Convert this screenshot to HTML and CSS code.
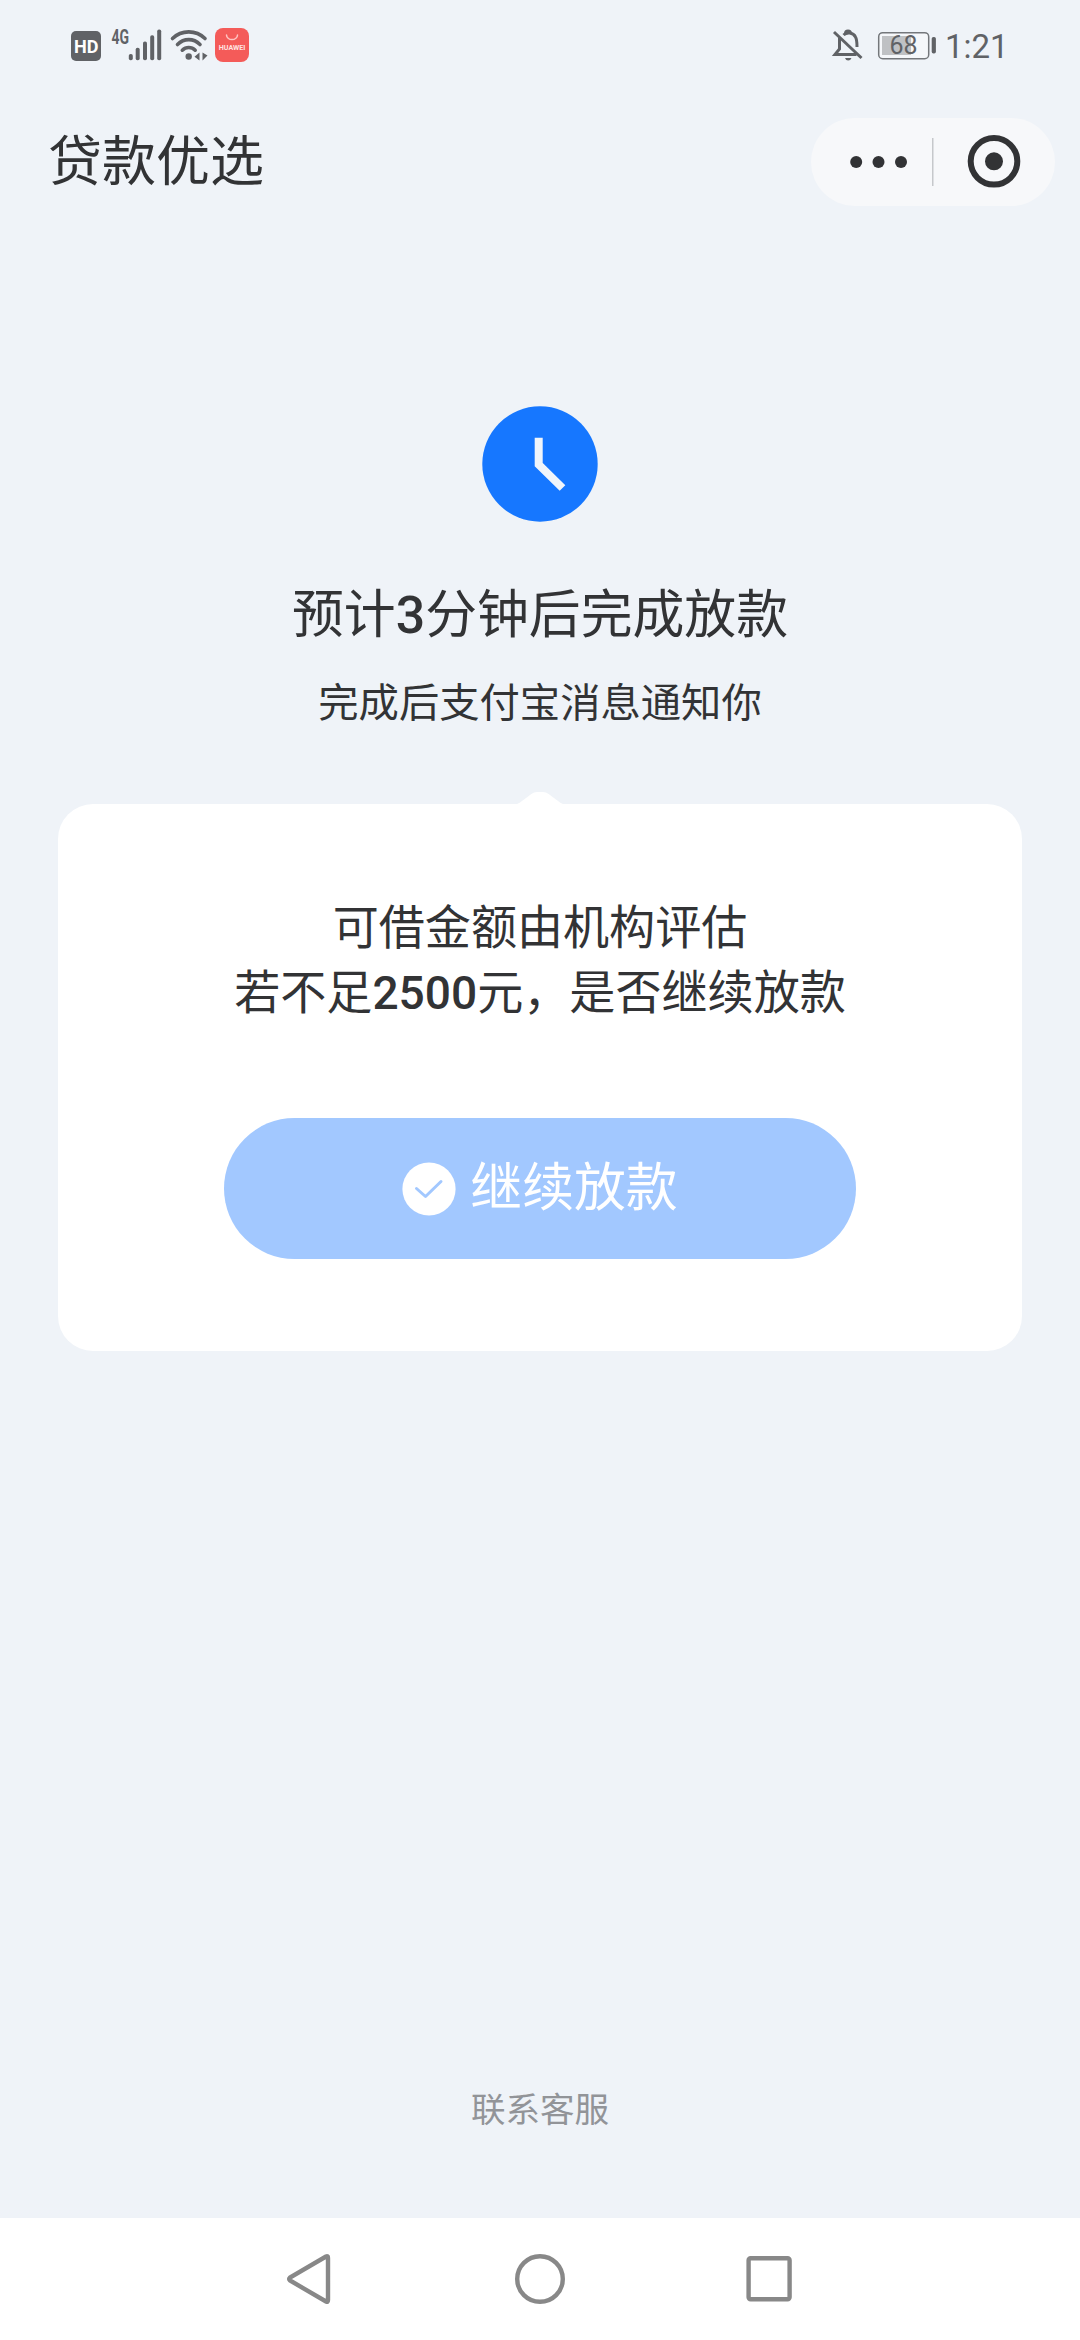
FILE: index.html
```html
<!DOCTYPE html>
<html lang="zh-CN">
<head>
<meta charset="utf-8">
<title>贷款优选</title>
<link rel="stylesheet" href="styles.css">
</head>
<body>
<div class="screen">
  <div class="status">
    <svg class="status-left" viewBox="0 0 184 90" width="184" height="90" fill="#606266">
      <rect x="1" y="31" width="30" height="30" rx="5"/>
      <text class="hd" x="4" y="52.5" textLength="24.500" lengthAdjust="spacingAndGlyphs">HD</text>
      <text class="net" x="41.500" y="43.500" textLength="17.500" lengthAdjust="spacingAndGlyphs">4G</text>
      <g>
        <rect x="58.800" y="54" width="4" height="6.300" rx="1.800"/>
        <rect x="65.700" y="47.700" width="4" height="12.600" rx="1.800"/>
        <rect x="73" y="41.500" width="4" height="18.800" rx="1.800"/>
        <rect x="80.200" y="35.300" width="4" height="25" rx="1.800"/>
        <rect x="87.200" y="29.500" width="4" height="30.800" rx="1.800"/>
      </g>
      <g fill="none" stroke="#606266" stroke-width="3.600" stroke-linecap="round">
        <path d="M102.500 38.500C111.500 29.700 126 29.700 135 38.500"/>
        <path d="M107.500 44.500C114 38 123.500 38 130 44.500"/>
        <path d="M112.300 50.200C116 46.500 121.500 46.500 125.200 50.200"/>
      </g>
      <circle cx="118.700" cy="56.500" r="3.200"/>
      <path d="M129.500 52.500V60.500L124.500 56.800ZM132.500 52.500V60.500L137.500 55.500Z"/>
      <rect x="145" y="28" width="34" height="34" rx="8" fill="#f45b59"/>
      <path d="M156.500 35a5.500 4.600 0 0 0 11 0" fill="none" stroke="#ffc4c1" stroke-width="1.500" stroke-linecap="round"/>
      <text class="brand" x="148.800" y="49.800" textLength="26.500" lengthAdjust="spacingAndGlyphs">HUAWEI</text>
    </svg>
    <svg class="status-right" viewBox="0 0 182 90" width="182" height="90" fill="#606266">
      <g fill="none" stroke="#606266" stroke-width="3">
        <path d="M8.500 38V49L4 54.500H25.500M12.500 35C15.500 32.200 22 32 24.500 37Q26 39.500 26 47"/>
        <path d="M14.500 33.500C14.500 30.300 19.500 30.300 19.500 33.500"/>
        <path d="M3 32L30.500 58"/>
      </g>
      <path d="M14 58H20.500Q19.500 60.500 17.200 60.500T14 58Z"/>
      <rect x="47.700" y="32.700" width="50" height="26" rx="4" fill="#f5f7fa" stroke="#74777b" stroke-width="1.500"/>
      <rect x="51" y="36" width="29" height="19" fill="#bfc1c4"/>
      <text class="battery" x="58.500" y="53.700" textLength="28" lengthAdjust="spacingAndGlyphs">68</text>
      <rect x="100.700" y="37" width="4.200" height="16.500" rx="1.800"/>
      <text class="time" x="114" y="57.700">1:21</text>
    </svg>
  </div>

  <header class="header">
    <h1 class="title">贷款优选</h1>
    <svg class="capsule" viewBox="0 0 244 88" width="244" height="88" fill="#323335">
      <rect width="244" height="88" rx="44" fill="#f7f8fa"/>
      <circle cx="45.200" cy="44" r="6"/>
      <circle cx="67.500" cy="44" r="6"/>
      <circle cx="90" cy="44" r="6"/>
      <rect x="121" y="20" width="1.500" height="48" fill="#c6c8cb"/>
      <circle cx="183" cy="43.300" r="23.300" fill="none" stroke="#323335" stroke-width="6"/>
      <circle cx="183" cy="43.300" r="9"/>
    </svg>
  </header>

  <main class="main">
    <svg class="clock" viewBox="0 0 116 116" width="116" height="116">
      <circle cx="58" cy="58" r="57.700" fill="#1677ff"/>
      <path d="M56.700 31.800V58.500L80.500 82" fill="none" stroke="#f0f5fb" stroke-width="8"/>
    </svg>
    <h2 class="heading">预计<b>3</b>分钟后完成放款</h2>
    <p class="sub">完成后支付宝消息通知你</p>
    <svg class="arrow" viewBox="0 0 50 13" width="50" height="13">
      <path d="M0 13Q4 11.500 8 8.200L16 2.200Q19 0 22 0H28Q31 0 34 2.200L42 8.200Q46 11.500 50 13Z" fill="#fff"/>
    </svg>
    <section class="card">
      <p class="card-text">可借金额由机构评估<br>若不足<b>2500</b>元，是否继续放款</p>
      <button class="button">
        <svg viewBox="0 0 54 54" width="54" height="54">
          <circle cx="27" cy="27" r="26.600" fill="#fff"/>
          <path d="M14.500 26.500L23.500 34.500L39 19.500" fill="none" stroke="#a2c8ff" stroke-width="3" stroke-linecap="round" stroke-linejoin="round"/>
        </svg>
        <span>继续放款</span>
      </button>
    </section>
  </main>

  <footer class="service">联系客服</footer>

  <nav class="nav">
    <svg viewBox="0 0 52 52" width="52" height="52"><path d="M41 3.500Q43 2.500 43 5V47Q43 49.500 41 48.500L5 27.500Q3.500 26 5 24.500Z"/></svg>
    <svg viewBox="0 0 52 52" width="52" height="52"><circle cx="26" cy="26" r="22.800"/></svg>
    <svg viewBox="0 0 52 52" width="52" height="52"><rect x="5.600" y="5.200" width="41" height="41" rx="2"/></svg>
  </nav>
</div>
</body>
</html>
```

FILE: styles.css
```css
* {
  box-sizing: border-box;
  margin: 0;
  padding: 0;
}

body {
  background: #eff3f8;
  color: #323335;
  font-family: Roboto, "Noto Sans CJK SC", sans-serif;
}

svg {
  display: block;
  flex: none;
}

b {
  font-weight: 500;
}

.screen {
  display: flex;
  flex-direction: column;
  width: 1080px;
  height: 2340px;
}

.status {
  display: flex;
  justify-content: space-between;
  height: 90px;
  padding: 0 68px 0 70px;
}

.status-right {
  margin-right: -1px;
}

.hd {
  fill: #fff;
  font-size: 19px;
  font-weight: 700;
}

.net {
  font-size: 20px;
  font-weight: 700;
}

.brand {
  fill: #ffe3e1;
  font-size: 6.5px;
  font-weight: 700;
}

.battery {
  font-size: 25px;
}

.time {
  font-size: 33px;
}

.header {
  display: flex;
  align-items: center;
  justify-content: space-between;
  height: 144px;
  padding: 0 25px 0 48px;
}

.title {
  padding-top: 2px;
  font-size: 54px;
  font-weight: 400;
  line-height: 80px;
}

.main {
  display: flex;
  flex: 1;
  flex-direction: column;
  align-items: center;
  padding-top: 172px;
}

.clock {
  margin-bottom: 57px;
}

.heading {
  font-size: 51.84px;
  font-weight: 400;
  line-height: 73px;
  white-space: nowrap;
}

.sub {
  margin-top: 23px;
  font-size: 40.32px;
  line-height: 57px;
  white-space: nowrap;
}

.arrow {
  margin-top: 60px;
}

.card {
  display: flex;
  flex-direction: column;
  align-items: center;
  width: 964px;
  height: 547px;
  margin-top: -1px;
  padding-top: 92px;
  border-radius: 35px;
  background: #fff;
}

.card-text {
  font-size: 46.08px;
  line-height: 65px;
  text-align: center;
  white-space: nowrap;
}

.button {
  display: flex;
  align-items: center;
  justify-content: center;
  gap: 14px;
  width: 632px;
  height: 141px;
  margin-top: 92px;
  border: 0;
  border-radius: 71px;
  background: #a2c8ff;
  color: #fff;
  font-family: inherit;
  font-size: 51.84px;
  line-height: 73px;
}

.service {
  height: 132px;
  color: #929498;
  font-size: 34.56px;
  line-height: 48px;
  text-align: center;
}

.nav {
  display: flex;
  align-items: center;
  justify-content: center;
  gap: 177px;
  height: 122px;
  background: #fff;
}

.nav svg {
  fill: none;
  stroke: #888;
  stroke-width: 4.4;
}
```
